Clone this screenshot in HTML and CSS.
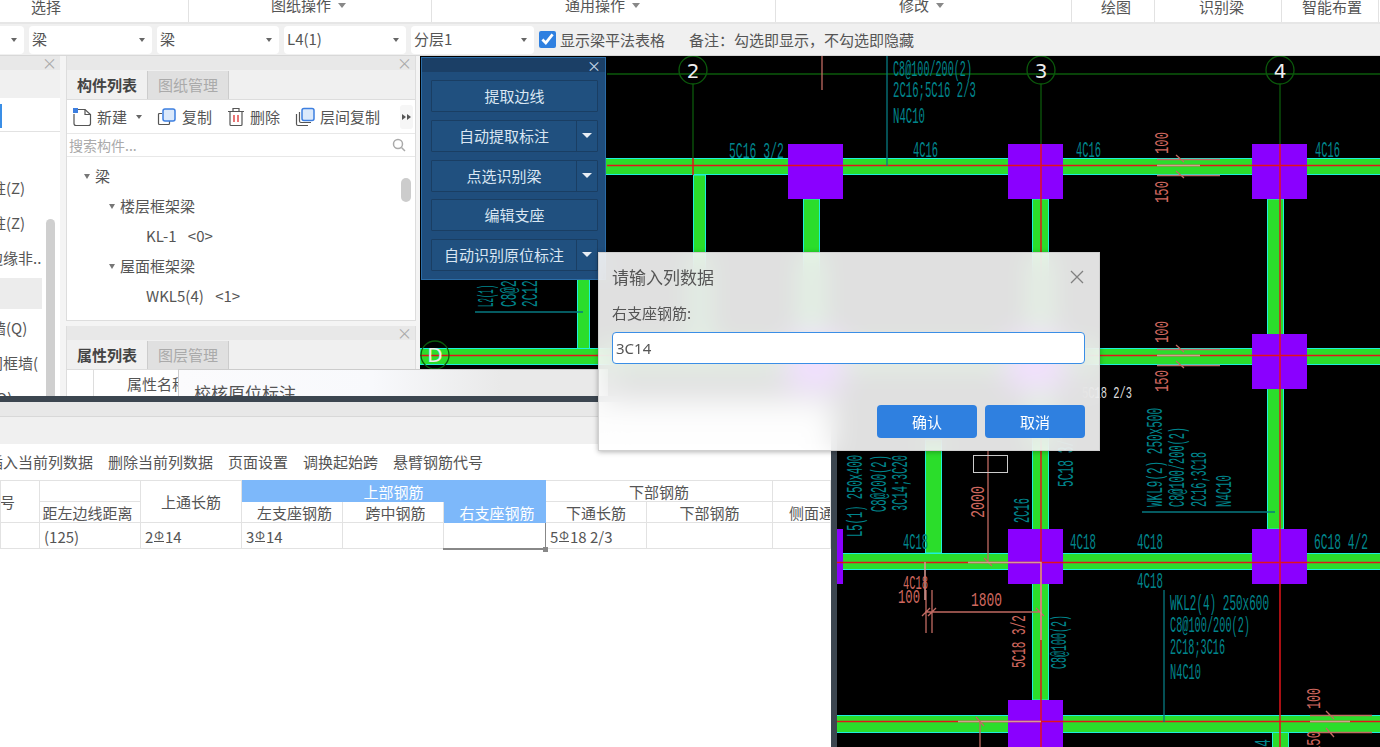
FILE: index.html
```html
<!DOCTYPE html>
<html lang="zh-CN">
<head>
    <meta charset="UTF-8">
    <title>识别梁</title>
    <link rel="stylesheet" href="styles.css">
</head>
<body>
    <div class="ribbon">
        <div class="ribbon-cell cell-select">选择</div>
        <div class="ribbon-cell cell-drawing drop">图纸操作<i class="caret"></i></div>
        <div class="ribbon-cell cell-common drop">通用操作<i class="caret"></i></div>
        <div class="ribbon-cell cell-modify drop">修改<i class="caret"></i></div>
        <div class="ribbon-cell cell-draw">绘图</div>
        <div class="ribbon-cell cell-beam">识别梁</div>
        <div class="ribbon-cell cell-smart">智能布置</div>
    </div>

    <div class="filter-bar">
        <div class="select select-first"><i class="caret-sm"></i></div>
        <div class="select">梁<i class="caret-sm"></i></div>
        <div class="select select-narrow">梁<i class="caret-sm"></i></div>
        <div class="select select-narrow">L4(1)<i class="caret-sm"></i></div>
        <div class="select">分层1<i class="caret-sm"></i></div>
        <input class="check" type="checkbox" checked>
        <span class="check-label">显示梁平法表格</span>
        <span class="note">备注：勾选即显示，不勾选即隐藏</span>
    </div>

    <div class="workspace">
        <!-- CAD drawing, coordinates are page pixels -->
        <svg class="cad" viewBox="420 55 960 692" width="960" height="692">
            <rect x="420" y="55" width="960" height="692" fill="#000"/>

            <line class="axis" x1="607" y1="74" x2="1380" y2="74"/>
            <line class="axis" x1="693" y1="84" x2="693" y2="160"/>
            <line class="axis" x1="1041" y1="84" x2="1041" y2="150"/>
            <line class="axis" x1="1280" y1="84" x2="1280" y2="150"/>

            <rect class="beam" x="693.5" y="175" width="12" height="175"/>
            <rect class="beam" x="803.5" y="199" width="16" height="150"/>
            <rect class="beam" x="577.5" y="275" width="12" height="75"/>
            <rect class="beam" x="1032.5" y="199" width="16" height="501"/>
            <rect class="beam" x="1267.5" y="199" width="16" height="330"/>
            <rect class="beam" x="925.5" y="440" width="16" height="113"/>
            <rect class="beam" x="1272.5" y="732" width="16" height="20"/>

            <rect class="beam" x="600" y="158.5" width="790" height="16"/>
            <rect class="beam" x="420" y="348.5" width="970" height="16"/>
            <rect class="beam" x="836" y="553.5" width="554" height="16"/>
            <rect class="beam" x="836" y="715.5" width="554" height="17"/>

            <rect class="column" x="788" y="144" width="55" height="55"/>
            <rect class="column" x="1008" y="144" width="55" height="55"/>
            <rect class="column" x="1252" y="144" width="55" height="55"/>
            <rect class="column" x="788" y="334" width="55" height="55"/>
            <rect class="column" x="1008" y="334" width="55" height="55"/>
            <rect class="column" x="1252" y="334" width="55" height="55"/>
            <rect class="column" x="788" y="529" width="55" height="55"/>
            <rect class="column" x="1008" y="529" width="55" height="55"/>
            <rect class="column" x="1252" y="529" width="55" height="55"/>
            <rect class="column" x="1008" y="700" width="55" height="55"/>

            <line class="red" x1="607" y1="165.5" x2="1380" y2="165.5"/>
            <line class="red" x1="420" y1="355.5" x2="1380" y2="355.5"/>
            <line class="red" x1="837" y1="562.5" x2="1380" y2="562.5"/>
            <line class="red" x1="837" y1="721.5" x2="1380" y2="721.5"/>
            <line class="red" x1="1041" y1="144" x2="1041" y2="747"/>
            <line class="red" x1="1280" y1="144" x2="1280" y2="747"/>
            <line class="red" x1="693" y1="158" x2="693" y2="175"/>

            <circle class="bubble" cx="693" cy="70" r="14"/>
            <circle class="bubble" cx="1041" cy="70" r="14"/>
            <circle class="bubble" cx="1280" cy="70" r="14"/>
            <circle class="bubble" cx="435" cy="355" r="14"/>
            <text class="bubble-text" x="693" y="78">2</text>
            <text class="bubble-text" x="1041" y="78">3</text>
            <text class="bubble-text" x="1280" y="78">4</text>
            <text class="bubble-text" x="435" y="362">D</text>

            <line class="dim" x1="822" y1="56" x2="822" y2="90"/>
            <line class="lead" x1="887" y1="56" x2="887" y2="166"/>
            <line class="lead" x1="475" y1="312" x2="583" y2="312"/>
            <line class="lead" x1="1142" y1="512" x2="1275" y2="512"/>
            <line class="lead" x1="1164" y1="590" x2="1164" y2="722"/>

            <!-- dimension marks on the beams -->
            <path class="dim" d="M1157 159.500H1220M1157 175.500H1220M1176 155L1184 162M1176 171L1184 178"/>
            <path class="dim-light" d="M1157 165.500H1200"/>
            <path class="dim" d="M1157 349.500H1220M1157 365.500H1220M1176 345L1184 352M1176 361L1184 368"/>
            <path class="dim-light" d="M1157 355.500H1200"/>
            <path class="dim" d="M988 451V562M984 558L992 566M926 590V633M932 590V633M925 612H1040M922 616L930 608M928 616L936 608M1036 608L1044 616"/>
            <path class="dim-light" d="M968 562.500H1041V640"/>
            <path class="dim-light" d="M925 562V600M958 721.500H1041"/>
            <path class="dim" d="M980 722V747M976 717L984 726M1310 715.500H1372M1310 732.500H1372M1326 711L1334 719M1326 728L1334 737"/>
            <path class="dim-light" d="M1310 721.500H1350"/>
            <rect class="marker" x="973.500" y="455.500" width="34" height="17"/>

            <!-- beam notes -->
            <text class="note-t" x="729" y="158" textLength="55" lengthAdjust="spacingAndGlyphs">5C16 3/2</text>
            <text class="note-t" x="893" y="76" textLength="79" lengthAdjust="spacingAndGlyphs">C8@100/200(2)</text>
            <text class="note-t" x="893" y="97" textLength="83" lengthAdjust="spacingAndGlyphs">2C16;5C16 2/3</text>
            <text class="note-t" x="893" y="123" textLength="32" lengthAdjust="spacingAndGlyphs">N4C10</text>
            <text class="note-t" x="913" y="157" textLength="25" lengthAdjust="spacingAndGlyphs">4C16</text>
            <text class="note-t" x="1076" y="157" textLength="25" lengthAdjust="spacingAndGlyphs">4C16</text>
            <text class="note-t" x="1315" y="157" textLength="25" lengthAdjust="spacingAndGlyphs">4C16</text>
            <text class="note-w" x="1082" y="398" textLength="50" lengthAdjust="spacingAndGlyphs">5C18 2/3</text>
            <text class="note-t" x="903" y="549" textLength="25" lengthAdjust="spacingAndGlyphs">4C18</text>
            <text class="note-t" x="1070" y="549" textLength="26" lengthAdjust="spacingAndGlyphs">4C18</text>
            <text class="note-t" x="1137" y="549" textLength="26" lengthAdjust="spacingAndGlyphs">4C18</text>
            <text class="note-t" x="1314" y="549" textLength="54" lengthAdjust="spacingAndGlyphs">6C18 4/2</text>
            <text class="note-t" x="1137" y="588" textLength="26" lengthAdjust="spacingAndGlyphs">4C18</text>
            <text class="note-t" x="1170" y="610" textLength="99" lengthAdjust="spacingAndGlyphs">WKL2(4) 250x600</text>
            <text class="note-t" x="1170" y="632" textLength="80" lengthAdjust="spacingAndGlyphs">C8@100/200(2)</text>
            <text class="note-t" x="1170" y="654" textLength="55" lengthAdjust="spacingAndGlyphs">2C18;3C16</text>
            <text class="note-t" x="1170" y="679" textLength="31" lengthAdjust="spacingAndGlyphs">N4C10</text>
            <text class="note-t" transform="rotate(-90 493 307)" x="493" y="307" textLength="40" lengthAdjust="spacingAndGlyphs">L2(1) 250</text>
            <text class="note-t" transform="rotate(-90 516 307)" x="516" y="307" textLength="40" lengthAdjust="spacingAndGlyphs">C8@200</text>
            <text class="note-t" transform="rotate(-90 537 307)" x="537" y="307" textLength="40" lengthAdjust="spacingAndGlyphs">2C12;3</text>
            <text class="note-t" transform="rotate(-90 862 537)" x="862" y="537" textLength="82" lengthAdjust="spacingAndGlyphs">L5(1) 250x400</text>
            <text class="note-t" transform="rotate(-90 886 512)" x="886" y="512" textLength="57" lengthAdjust="spacingAndGlyphs">C8@200(2)</text>
            <text class="note-t" transform="rotate(-90 907 511)" x="907" y="511" textLength="56" lengthAdjust="spacingAndGlyphs">3C14;3C20</text>
            <text class="note-t" transform="rotate(-90 1073 487)" x="1073" y="487" textLength="54" lengthAdjust="spacingAndGlyphs">5C18 3/2</text>
            <text class="note-t" transform="rotate(-90 1029 523)" x="1029" y="523" textLength="25" lengthAdjust="spacingAndGlyphs">2C16</text>
            <text class="note-t" transform="rotate(-90 1162 507)" x="1162" y="507" textLength="99" lengthAdjust="spacingAndGlyphs">WKL9(2) 250x500</text>
            <text class="note-t" transform="rotate(-90 1184 507)" x="1184" y="507" textLength="80" lengthAdjust="spacingAndGlyphs">C8@100/200(2)</text>
            <text class="note-t" transform="rotate(-90 1206 507)" x="1206" y="507" textLength="55" lengthAdjust="spacingAndGlyphs">2C16;3C18</text>
            <text class="note-t" transform="rotate(-90 1231 507)" x="1231" y="507" textLength="32" lengthAdjust="spacingAndGlyphs">N4C10</text>
            <text class="note-t" transform="rotate(-90 1066 669)" x="1066" y="669" textLength="54" lengthAdjust="spacingAndGlyphs">C8@100(2)</text>
            <text class="note-t" transform="rotate(-90 1270 747)" x="1270" y="747" textLength="8" lengthAdjust="spacingAndGlyphs">4</text>

            <!-- dimension texts -->
            <text class="dim-t" transform="rotate(-90 1168 154)" x="1168" y="154" textLength="22" lengthAdjust="spacingAndGlyphs">100</text>
            <text class="dim-t" transform="rotate(-90 1168 203)" x="1168" y="203" textLength="22" lengthAdjust="spacingAndGlyphs">150</text>
            <text class="dim-t" transform="rotate(-90 1168 343)" x="1168" y="343" textLength="22" lengthAdjust="spacingAndGlyphs">100</text>
            <text class="dim-t" transform="rotate(-90 1168 392)" x="1168" y="392" textLength="22" lengthAdjust="spacingAndGlyphs">150</text>
            <text class="dim-t" transform="rotate(-90 984 518)" x="984" y="518" textLength="32" lengthAdjust="spacingAndGlyphs">2000</text>
            <text class="dim-t" x="903" y="589" textLength="25" lengthAdjust="spacingAndGlyphs">4C18</text>
            <text class="dim-t" x="898" y="603" textLength="22" lengthAdjust="spacingAndGlyphs">100</text>
            <text class="dim-t" x="971" y="606" textLength="31" lengthAdjust="spacingAndGlyphs">1800</text>
            <text class="dim-t" transform="rotate(-90 1025 668)" x="1025" y="668" textLength="53" lengthAdjust="spacingAndGlyphs">5C18 3/2</text>
            <text class="dim-t" transform="rotate(-90 1320 709)" x="1320" y="709" textLength="21" lengthAdjust="spacingAndGlyphs">100</text>
            <text class="dim-t" transform="rotate(-90 1320 753)" x="1320" y="753" textLength="22" lengthAdjust="spacingAndGlyphs">150</text>
        </svg>

        <!-- left dock -->
        <div class="dock dock-nav">
            <div class="dock-head"><span class="close">×</span></div>
            <div class="nav-strip"></div>
            <div class="nav-tools"><i class="nav-mark"></i></div>
            <div class="nav-list">
                <div class="nav-row">柱(Z)</div>
                <div class="nav-row">柱(Z)</div>
                <div class="nav-row nav-row-long">边缘非..</div>
                <div class="nav-row nav-row-on"></div>
                <div class="nav-row">墙(Q)</div>
                <div class="nav-row nav-row-long">门框墙(</div>
                <div class="nav-row">(Q)</div>
                <i class="nav-scroll"></i>
            </div>
        </div>

        <div class="dock dock-parts">
            <div class="dock-head"><span class="close">×</span></div>
            <div class="tabs">
                <div class="tab tab-on">构件列表</div>
                <div class="tab">图纸管理</div>
            </div>
            <div class="tools">
                <div class="tool">
                    <svg width="20" height="20" viewBox="0 0 20 20"><path class="ico" d="M4 2.500H13L18.500 7.500V16.500Q18.500 18.500 16.500 18.500H4Q2 18.500 2 16.500V7"/><path class="ico" d="M13 2.500V7.500H18.500"/><rect x="1" y="1" width="5" height="5" fill="#3d7fe0"/></svg>
                    新建<i class="caret-sm tool-caret"></i>
                </div>
                <div class="tool">
                    <svg width="20" height="20" viewBox="0 0 20 20"><path class="ico" d="M5 6.500H2.500Q1.500 6.500 1.500 7.500V16.500Q1.500 17.500 2.500 17.500H11.500Q12.500 17.500 12.500 16.500V14"/><rect class="ico-blue" x="6" y="2" width="12" height="12" rx="2"/></svg>
                    复制
                </div>
                <div class="tool tool-del">
                    <svg width="18" height="20" viewBox="0 0 18 20"><path class="ico" d="M1 4.500H17M6 4.500V1.500H12V4.500M3 4.500V17.500Q3 18.500 4 18.500H14Q15 18.500 15 17.500V4.500"/><path class="ico-red" d="M7 8V15M11 8V15"/></svg>
                    删除
                </div>
                <div class="tool">
                    <svg width="20" height="20" viewBox="0 0 20 20"><path class="ico" d="M1.500 7V17Q1.500 18.500 3 18.500H13M4.500 5V14Q4.500 15.500 6 15.500H16"/><rect class="ico-blue" x="7" y="1.500" width="12" height="12" rx="2"/></svg>
                    层间复制
                </div>
                <div class="tool-more"><i></i><i></i></div>
            </div>
            <div class="search">
                <span>搜索构件...</span>
                <svg width="14" height="14" viewBox="0 0 14 14"><circle cx="6" cy="6" r="4.500" fill="none" stroke="#aaa" stroke-width="1.500"/><path d="M9.500 9.500L13 13" stroke="#aaa" stroke-width="1.500"/></svg>
            </div>
            <div class="tree">
                <div class="tree-row lv1"><i class="caret-tree"></i>梁</div>
                <div class="tree-row lv2"><i class="caret-tree"></i>楼层框架梁</div>
                <div class="tree-row lv3">KL-1 &lt;0&gt;</div>
                <div class="tree-row lv2"><i class="caret-tree"></i>屋面框架梁</div>
                <div class="tree-row lv3">WKL5(4) &lt;1&gt;</div>
                <i class="tree-scroll"></i>
            </div>
        </div>

        <div class="dock dock-props">
            <div class="dock-head"><span class="close">×</span></div>
            <div class="tabs">
                <div class="tab tab-on">属性列表</div>
                <div class="tab">图层管理</div>
            </div>
            <div class="prop-head">
                <div class="prop-num"></div>
                <div class="prop-name">属性名称</div>
            </div>
        </div>

        <!-- blue float window -->
        <div class="float-tool">
            <div class="float-head"><span>×</span></div>
            <div class="float-body">
                <div class="fbtn">提取边线</div>
                <div class="fbtn fbtn-split"><span>自动提取标注</span><i></i></div>
                <div class="fbtn fbtn-split"><span>点选识别梁</span><i></i></div>
                <div class="fbtn fbtn-short">编辑支座</div>
                <div class="fbtn fbtn-split"><span>自动识别原位标注</span><i></i></div>
            </div>
        </div>

        <div class="check-popup">校核原位标注</div>

        <!-- bottom table window -->
        <div class="table-win">
            <div class="win-title"></div>
            <div class="win-strip"></div>
            <div class="win-tools">
                <span>插入当前列数据</span>
                <span>删除当前列数据</span>
                <span>页面设置</span>
                <span>调换起始跨</span>
                <span>悬臂钢筋代号</span>
            </div>
            <table class="rebar-table">
                <colgroup>
                    <col class="c39"><col class="c101"><col class="c101"><col class="c101"><col class="c101">
                    <col class="c102"><col class="c101"><col class="c126"><col class="c58">
                </colgroup>
                <tr class="head-row">
                    <th rowspan="2" class="th-num">跨号</th>
                    <th></th>
                    <th rowspan="2">上通长筋</th>
                    <th colspan="3" class="th-on">上部钢筋</th>
                    <th colspan="2">下部钢筋</th>
                    <th></th>
                </tr>
                <tr class="head-row">
                    <th class="th-dist">距左边线距离</th>
                    <th class="th-sub">左支座钢筋</th>
                    <th class="th-sub">跨中钢筋</th>
                    <th class="th-on th-sub">右支座钢筋</th>
                    <th>下通长筋</th>
                    <th>下部钢筋</th>
                    <th class="th-clip">侧面通长筋</th>
                </tr>
                <tr class="data-row">
                    <td></td>
                    <td>(125)</td>
                    <td>2<span class="bar">Φ</span>14</td>
                    <td>3<span class="bar">Φ</span>14</td>
                    <td></td>
                    <td class="td-active"><i></i></td>
                    <td>5<span class="bar">Φ</span>18 2/3</td>
                    <td></td>
                    <td></td>
                </tr>
            </table>
        </div>

        <!-- input dialog -->
        <div class="dialog">
            <div class="dialog-head">
                <span>请输入列数据</span>
                <svg width="16" height="16" viewBox="0 0 16 16"><path d="M2 2L14 14M14 2L2 14" stroke="#808080" stroke-width="1.300"/></svg>
            </div>
            <label class="dialog-label">右支座钢筋:</label>
            <input class="dialog-input" type="text" value="3C14">
            <div class="dialog-btns">
                <button class="btn">确认</button>
                <button class="btn">取消</button>
            </div>
        </div>
    </div>
</body>
</html>
```

FILE: styles.css
```css
* {
    margin: 0; padding: 0; box-sizing: border-box;
}
html, body {
    width: 1380px; height: 747px; overflow: hidden;
}
body {
    background: #f0f0f0; color: #555;
    font-family: "Noto Sans CJK SC", "Noto Sans", sans-serif; font-size: 15px;
    display: flex; flex-direction: column;
}
i { display: block; }

/* ribbon */
.ribbon {
    height: 24px; flex: none; display: flex; background: #fff;
    border-bottom: 2px solid #e6e6e6; overflow: hidden;
}
.ribbon-cell {
    height: 22px; line-height: 14px; border-right: 1px solid #e2e2e2; white-space: nowrap; display: flex;
}
.ribbon-cell.drop { line-height: 10px; }
.caret {
    width: 0; height: 0; margin: 3px 0 0 7px;
    border: 4.500px solid transparent; border-top: 5px solid #888; border-bottom: 0;
}
.cell-select { width: 189px; padding-left: 31px; }
.cell-drawing { width: 243px; padding-left: 82px; }
.cell-common { width: 344px; padding-left: 133px; }
.cell-modify { width: 296px; padding-left: 123px; }
.cell-draw { width: 83px; padding-left: 29px; }
.cell-beam { width: 127px; padding-left: 44px; }
.cell-smart { width: 97px; padding-left: 20px; }

/* filter bar */
.filter-bar {
    height: 31px; flex: none; display: flex; align-items: center; gap: 5px; background: #f0f0f0;
}
.select {
    width: 123px; height: 28px; line-height: 25px; padding-left: 3px; position: relative;
    background: #fff; border-radius: 4px; white-space: nowrap;
}
.select-first { width: 24px; border-radius: 0 4px 4px 0; }
.select-narrow { width: 122px; }
.caret-sm {
    width: 0; height: 0;
    border: 3px solid transparent; border-top: 4px solid #666; border-bottom: 0;
}
.select .caret-sm { position: absolute; right: 7px; top: 12px; }
.check { width: 17px; height: 17px; accent-color: #2f80e0; }
.check-label { margin-left: -1px; }
.note { margin-left: 19px; }

/* workspace: free canvas of floating windows */
.workspace {
    position: relative; flex: 1; overflow: hidden; background: #f4f4f4; border-top: 1px solid #d8d8d8;
}
.cad { position: absolute; left: 420px; top: -1px; display: block; }
.axis { stroke: #0b5a0b; stroke-width: 1.300; }
.beam { fill: #2bdd2b; stroke: #1cf0dc; stroke-width: 1; }
.column { fill: #8a00ff; }
.red { stroke: #e2141a; stroke-width: 1.500; }
.bubble { fill: none; stroke: #0b5a0b; stroke-width: 1.300; }
.bubble-text { fill: #eee; font-family: "DejaVu Sans", sans-serif; font-size: 20px; text-anchor: middle; }
.dim { fill: none; stroke: #c06a62; stroke-width: 1.300; }
.dim-light { fill: none; stroke: #d89a94; stroke-width: 1.500; }
.lead { stroke: #077a82; stroke-width: 1.300; }
.marker { fill: none; stroke: #ccc; stroke-width: 1; }
.note-t, .note-w, .dim-t { font-family: "Liberation Mono", monospace; font-size: 22px; }
.note-t { fill: #00858c; }
.note-w { fill: #ddd; font-size: 17px; }
.dim-t { fill: #d0685f; font-size: 20px; }

.dock { position: absolute; background: #fff; overflow: hidden; }
.dock-head {
    height: 14px; background: #e8e8e8; position: relative;
}
.close {
    position: absolute; right: 3px; top: -3px; font-size: 15px; line-height: 20px; color: #aaa;
}
.dock-nav { left: 0; top: 0; width: 60px; height: 341px; }
.nav-strip { height: 28px; background: #f0f0f0; }
.nav-tools {
    height: 34px; border-bottom: 1px solid #e2e2e2; padding-top: 6px;
}
.nav-mark { width: 2px; height: 24px; background: #3a8ee6; }
.nav-list { position: relative; padding-top: 38px; }
.nav-row {
    height: 35px; line-height: 35px; margin-left: -9px; white-space: nowrap;
}
.nav-row-long { margin-left: -12px; }
.nav-row-on { background: #ececec; width: 51px; height: 31px; margin-top: 3px; margin-bottom: 1px; }
.nav-scroll {
    position: absolute; left: 46px; top: 87px; width: 9px; height: 200px; background: #cfcfcf; border-radius: 5px;
}

.dock-parts { left: 66px; top: 0; width: 350px; height: 265px; border-right: 1px solid #ddd; border-bottom: 1px solid #ddd; border-left: 1px solid #ddd; }
.dock-props { left: 66px; top: 270px; width: 350px; height: 71px; border-left: 1px solid #ddd; border-right: 1px solid #ddd; }
.tabs {
    height: 30px; display: flex; background: #f0f0f0; border-bottom: 1px solid #ddd; padding-top: 1px;
}
.tab {
    width: 81px; text-align: center; line-height: 27px; color: #aaa; background: #e0e0e0; border-right: 1px solid #ccc;
}
.tab-on { color: #444; font-weight: 700; background: #f0f0f0; }
.tools {
    height: 34px; display: flex; align-items: center; padding-left: 5px; border-bottom: 1px solid #e8e8e8; position: relative;
}
.tool { display: flex; align-items: center; gap: 5px; margin-right: 15px; white-space: nowrap; }
.tool-caret { margin-left: 4px; }
.ico { fill: none; stroke: #555; stroke-width: 1.200; }
.ico-blue { fill: #dbe9fb; stroke: #3d7fe0; stroke-width: 1.500; }
.ico-red { fill: none; stroke: #e03c3c; stroke-width: 1.400; }
.tool-more {
    position: absolute; right: 2px; top: 5px; width: 13px; height: 24px; gap: 1px;
    display: flex; align-items: center; justify-content: center; border-radius: 3px; background: #f6f6f6;
}
.tool-more i {
    width: 0; height: 0; border: 3px solid transparent; border-left: 4px solid #555; border-right: 0;
}
.search {
    height: 23px; display: flex; justify-content: space-between; align-items: center;
    padding: 0 9px 0 2px; font-size: 14px; color: #aaa; border-bottom: 1px solid #e8e8e8;
}
.tree { position: relative; padding-top: 4px; }
.tree-row { height: 30px; line-height: 30px; display: flex; align-items: center; gap: 5px; white-space: nowrap; word-spacing: 8px; }
.caret-tree {
    width: 0; height: 0; border: 3.500px solid transparent; border-top: 5px solid #777; border-bottom: 0;
}
.lv1 { padding-left: 17px; }
.lv2 { padding-left: 42px; }
.lv3 { padding-left: 79px; }
.tree-scroll {
    position: absolute; right: 4px; top: 21px; width: 10px; height: 24px; background: #ccc; border-radius: 5px;
}
.prop-head { display: flex; height: 28px; line-height: 28px; }
.prop-num { width: 27px; border-right: 1px solid #ddd; }
.prop-name { padding-left: 33px; white-space: nowrap; }

/* blue tool window */
.float-tool {
    position: absolute; left: 421px; top: 1px; width: 185px; height: 223px;
    background: #1f4d7c; border: 1px solid #2b6ca6;
}
.float-head {
    height: 14px; background: #1b3f66; position: relative; color: #c5d8ea; font-size: 14px; line-height: 14px; text-align: right; padding-right: 4px;
}
.float-body { padding: 8px 7px 0 9px; display: flex; flex-direction: column; gap: 8px; }
.fbtn {
    height: 32px; line-height: 30px; text-align: center; color: #d9e6f2;
    background: #20507f; border: 1px solid #1a3e63; border-radius: 1px;
}
.fbtn-short { margin-top: -1px; }
.fbtn-split { display: flex; padding: 0; }
.fbtn-split span { flex: 1; border-right: 1px solid #1a3e63; }
.fbtn-split i {
    width: 20px; position: relative;
}
.fbtn-split i::after {
    content: ""; position: absolute; left: 5px; top: 12px;
    border: 5px solid transparent; border-top: 5px solid #e8eef5; border-bottom: 0;
}

.check-popup {
    position: absolute; left: 178px; top: 313px; width: 430px; height: 28px; padding: 11px 0 0 15px;
    font-size: 17px; line-height: 24px; color: #555; overflow: hidden;
    background: linear-gradient(90deg, #fbfbfd 0%, #f8f9fc 45%, #e9e9e9 75%, #e9e9e9 100%);
    border-top: 1px solid #ccc; border-left: 1px solid #ccc;
}

/* bottom window */
.table-win {
    position: absolute; left: 0; top: 340px; width: 837px; bottom: 0; background: #fff;
    border-top: 6px solid #3c4650; border-right: 6px solid #3c4650; overflow: hidden;
}
.win-title { height: 15px; background: #e8e8e8; border-bottom: 1px solid #d8d8d8; }
.win-strip { height: 27px; background: #f0f0f0; }
.win-tools {
    height: 36px; display: flex; gap: 15px; align-items: flex-end; margin-left: -12px; white-space: nowrap; padding-bottom: 8px;
}
.rebar-table {
    width: 830px; table-layout: fixed; border-collapse: collapse; font-size: 15px;
}
.c39 { width: 39px; } .c58 { width: 58px; } .c101 { width: 101px; } .c102 { width: 102px; } .c126 { width: 126px; }
.rebar-table th, .rebar-table td {
    border: 1px solid #e2e2e2; font-weight: 400; white-space: nowrap; overflow: hidden; padding: 0;
}
.rebar-table .th-num { text-align: right; direction: rtl; padding-right: 24px; }
.head-row { height: 21px; line-height: 19px; }
.rebar-table .th-on { background: #7db8fa; color: #fff; border-color: #7db8fa; }
.rebar-table .th-dist { padding-right: 5px; }
.rebar-table .th-sub { padding-left: 5px; }
.rebar-table .th-clip { text-align: left; padding-left: 16px; }
.data-row { height: 26px; }
.rebar-table td { padding: 2px 0 0 4px; }
.bar {
    display: inline-block; font-size: 12px; line-height: 12px; border-bottom: 1px solid #555;
    margin: 0 1px; vertical-align: 3px;
}
.rebar-table .td-active {
    position: relative; overflow: visible; border: 1px solid #888; border-bottom: 2px solid #888; border-top: 0;
}
.td-active i {
    position: absolute; right: -3px; bottom: -4px; width: 5px; height: 5px; background: #888;
}

/* dialog */
.dialog {
    position: absolute; left: 598px; top: 196px; width: 502px; height: 199px; padding: 0 14px 0 13px;
    background: rgba(255, 255, 255, 0.88); backdrop-filter: blur(14px);
    border: 1px solid #d0d0d0; box-shadow: 0 1px 5px rgba(0, 0, 0, 0.3);
    display: flex; flex-direction: column;
}
.dialog-head {
    height: 47px; display: flex; justify-content: space-between; align-items: center; font-size: 17px;
}
.dialog-label { height: 31px; line-height: 24px; margin-top: 1px; }
.dialog-input {
    height: 32px; width: 473px; padding-left: 3px; border: 1.500px solid #3a8ee6; border-radius: 4px;
    font: 15px "Noto Sans", sans-serif; color: #555; background: #fff; outline: none;
}
.dialog-btns { display: flex; justify-content: flex-end; gap: 8px; margin-top: 41px; }
.btn {
    width: 100px; height: 33px; border: 0; border-radius: 4px; background: #2f80e0; color: #fff;
    font: 15px "Noto Sans CJK SC", sans-serif;
}
```
